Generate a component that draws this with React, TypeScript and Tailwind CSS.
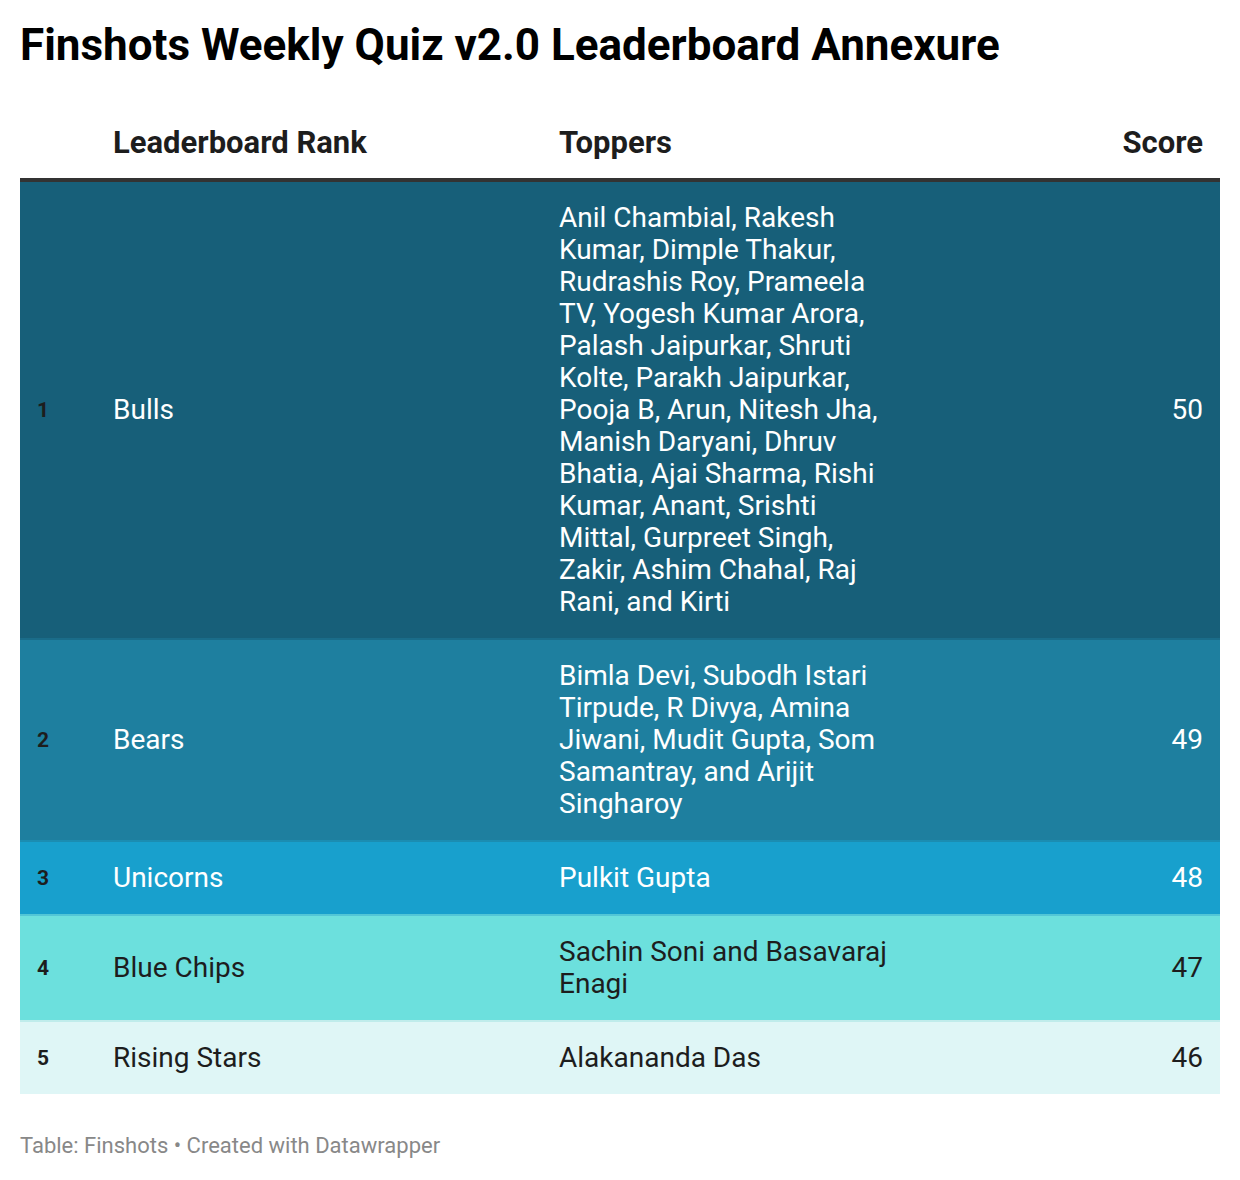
const rows = [
  {
    rank: 1,
    team: 'Bulls',
    toppers:
      'Anil Chambial, Rakesh Kumar, Dimple Thakur, Rudrashis Roy, Prameela TV, Yogesh Kumar Arora, Palash Jaipurkar, Shruti Kolte, Parakh Jaipurkar, Pooja B, Arun, Nitesh Jha, Manish Daryani, Dhruv Bhatia, Ajai Sharma, Rishi Kumar, Anant, Srishti Mittal, Gurpreet Singh, Zakir, Ashim Chahal, Raj Rani, and Kirti',
    score: 50,
    row: 'bg-[#175f79] text-white border-b-2 border-[#1a6c89]',
  },
  {
    rank: 2,
    team: 'Bears',
    toppers: 'Bimla Devi, Subodh Istari Tirpude, R Divya, Amina Jiwani, Mudit Gupta, Som Samantray, and Arijit Singharoy',
    score: 49,
    row: 'bg-[#1e7f9f] text-white border-b-2 border-[#1b8db2]',
  },
  {
    rank: 3,
    team: 'Unicorns',
    toppers: 'Pulkit Gupta',
    score: 48,
    row: 'bg-[#18a0cd] text-white border-b-2 border-[#52c6d6]',
  },
  {
    rank: 4,
    team: 'Blue Chips',
    toppers: 'Sachin Soni and Basavaraj Enagi',
    score: 47,
    row: 'bg-[#6ce0dd] text-[#1d1d1d] border-b-2 border-[#bfeceb]',
  },
  {
    rank: 5,
    team: 'Rising Stars',
    toppers: 'Alakananda Das',
    score: 46,
    row: 'bg-[#dff6f6] text-[#1d1d1d]',
  },
]

export default function App() {
  return (
    <div className="bg-white min-h-[1180px] px-5 pt-[19px] font-['Roboto',sans-serif]">
      <h1 className="text-[44px] leading-[52px] font-bold text-black">
        Finshots Weekly Quiz v2.0 Leaderboard Annexure
      </h1>

      <div className="mt-[56px]">
        <div className="grid grid-cols-[93px_446px_340px_1fr] border-b-4 border-[#333333] pb-[19px] text-[31px] leading-[32px] font-bold text-[#1d1d1d]">
          <div></div>
          <div>Leaderboard Rank</div>
          <div>Toppers</div>
          <div className="text-right pr-[17px]">Score</div>
        </div>

        {rows.map(r => (
          <div key={r.rank} className={`grid grid-cols-[93px_446px_340px_1fr] items-center py-5 text-[28px] leading-[32px] ${r.row}`}>
            <div className="pl-[17px] text-[21px] font-bold text-[#1d1d1d]">{r.rank}</div>
            <div>{r.team}</div>
            <div>{r.toppers}</div>
            <div className="text-right pr-[17px]">{r.score}</div>
          </div>
        ))}
      </div>

      <p className="mt-[38px] text-[22px] leading-[28px] text-[#888888]">
        Table: Finshots • Created with Datawrapper
      </p>
    </div>
  )
}
